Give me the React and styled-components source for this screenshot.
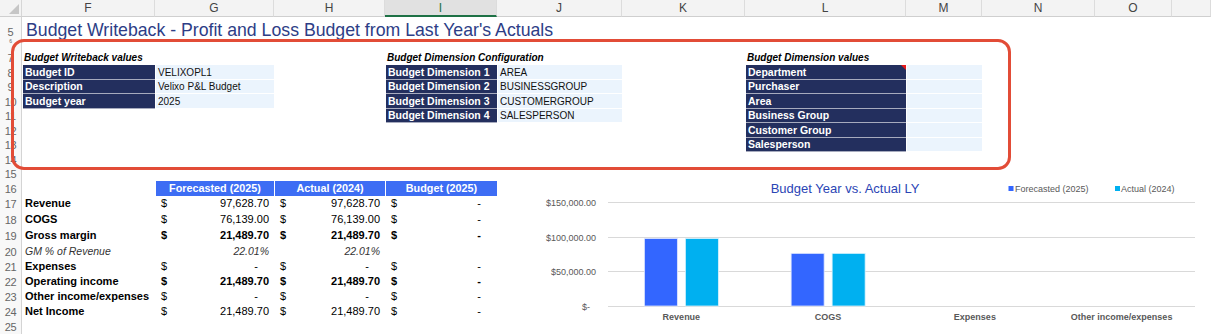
import React from 'react';
import styled, { createGlobalStyle, css } from 'styled-components';

const GlobalStyle = createGlobalStyle`
  html, body { margin: 0; padding: 0; background: #ffffff; }
  body { font-family: "Liberation Sans", Arial, sans-serif; overflow: hidden; }
`;

const COLS = ['F', 'G', 'H', 'I', 'J', 'K', 'L', 'M', 'N', 'O', ''];
const COL_WIDTHS = [133, 119, 111, 112, 125, 123, 161, 76, 113, 77];
const ROW_HEIGHTS = {
  5: 22, 6: 5, 7: 21, 8: 15, 9: 14, 10: 15, 11: 14, 12: 15, 13: 14, 14: 15,
  15: 14, 16: 15, 17: 15, 18: 16, 19: 16, 20: 16, 21: 15, 22: 15, 23: 15, 24: 15, 25: 15,
};
const ROWS = Object.keys(ROW_HEIGHTS).map(Number);

const col = (letter) => COLS.indexOf(letter) + 2;
const row = (n) => n - 3;

const Sheet = styled.div`
  position: relative;
  display: grid;
  grid-template-columns: 22px ${COL_WIDTHS.map((w) => `${w}px`).join(' ')} 1fr;
  grid-template-rows: 17px ${ROWS.map((r) => `${ROW_HEIGHTS[r]}px`).join(' ')};
  width: 1211px;
  height: 334px;
  overflow: hidden;
  background: #ffffff;
`;

const Corner = styled.div`
  grid-column: 1;
  grid-row: 1;
  position: relative;
  background: #f3f3f3;
  border-right: 1px solid #d6d6d6;
  border-bottom: 1px solid #cfcfcf;
  &::after {
    content: '';
    position: absolute;
    right: 2px;
    bottom: 2px;
    border-left: 10px solid transparent;
    border-bottom: 10px solid #c6c6c6;
  }
`;

const ColHead = styled.div`
  grid-row: 1;
  grid-column: ${(p) => p.$col};
  display: flex;
  align-items: center;
  justify-content: center;
  background: #f3f3f3;
  border-right: 1px solid #dcdcdc;
  border-bottom: 1px solid #cfcfcf;
  font-size: 12px;
  color: #444444;
  ${(p) =>
    p.$selected &&
    css`
      background: #e1e1e1;
      border-bottom: 2px solid #1e7145;
      color: #1e7145;
    `}
`;

const RowHead = styled.div`
  grid-column: 1;
  grid-row: ${(p) => p.$row};
  display: flex;
  align-items: flex-end;
  justify-content: center;
  overflow: hidden;
  background: #f8f8f8;
  border-right: 1px solid #d4d4d4;
  font-size: ${(p) => (p.$tiny ? '5px' : '11px')};
  line-height: ${(p) => (p.$tiny ? '5px' : '13px')};
  letter-spacing: -0.3px;
  color: #666666;
`;

const Cell = styled.div`
  grid-column: ${(p) => p.$col} / span ${(p) => p.$span || 1};
  grid-row: ${(p) => p.$row};
  display: flex;
  align-items: flex-end;
  min-width: 0;
  padding: 0 2px 1px 3px;
  font-size: 11px;
  line-height: 13px;
  color: #111111;
  white-space: nowrap;
`;

const Title = styled(Cell)`
  font-size: 17.7px;
  line-height: 18px;
  padding: 0 0 0 4px;
  color: #2d3d86;
`;

const SectionTitle = styled(Cell)`
  font-size: 10px;
  font-weight: bold;
  font-style: italic;
  padding-left: 2px;
  color: #000000;
`;

const NavyCell = styled(Cell)`
  position: relative;
  align-items: center;
  background: #232f5e;
  color: #ffffff;
  font-weight: bold;
  font-size: 10.5px;
  padding: 0 2px 0 2px;
  margin-left: 1px;
  border-bottom: 1px solid rgba(255, 255, 255, 0.6);
  ${(p) =>
    p.$comment &&
    css`
      &::after {
        content: '';
        position: absolute;
        top: 0;
        right: 0;
        border-left: 5px solid transparent;
        border-top: 5px solid #e81a1a;
      }
    `}
`;

const ValueCell = styled(Cell)`
  align-items: center;
  background: #ebf4fd;
  font-size: 10px;
  color: #111111;
  padding: 0 2px 0 2px;
  border-left: 1px solid #ffffff;
  border-bottom: 1px solid #ffffff;
`;

const HeadCell = styled(Cell)`
  justify-content: center;
  align-items: center;
  padding: 0;
  background: #3d6df4;
  color: #ffffff;
  font-weight: bold;
  font-size: 10.8px;
  margin-left: 1px;
`;

const RowLabel = styled(Cell)`
  font-weight: ${(p) => (p.$italic ? 'normal' : 'bold')};
  font-style: ${(p) => (p.$italic ? 'italic' : 'normal')};
  font-size: ${(p) => (p.$italic ? '10.5px' : '11px')};
  color: ${(p) => (p.$italic ? '#333333' : '#000000')};
  padding-left: 3px;
`;

const Amount = styled(Cell)`
  justify-content: ${(p) => (p.$percent ? 'flex-end' : 'space-between')};
  padding: 0 5px 1px 6px;
  font-weight: ${(p) => (p.$bold ? 'bold' : 'normal')};
  font-style: ${(p) => (p.$percent ? 'italic' : 'normal')};
  font-size: ${(p) => (p.$percent ? '10.5px' : '11px')};
  color: ${(p) => (p.$percent ? '#333333' : '#000000')};
`;

const Dash = styled.span`
  padding-right: 11px;
`;

const Highlight = styled.div`
  position: absolute;
  left: 11px;
  top: 39px;
  width: 1000px;
  height: 131px;
  box-sizing: border-box;
  border: 3.5px solid #e24c37;
  border-radius: 13px;
  pointer-events: none;
`;

const ChartArea = styled.div`
  grid-column: ${col('J')} / -1;
  grid-row: ${row(16)} / ${row(25) + 1};
  position: relative;
`;

const ChartSvg = styled.svg`
  display: block;
  font-family: "Liberation Sans", Arial, sans-serif;
`;

const ChartTitle = styled.text`
  font-size: 13px;
  fill: #2b45b5;
`;

const AxisText = styled.text`
  font-size: 9px;
  fill: #595959;
  font-weight: ${(p) => (p.$bold ? 'bold' : 'normal')};
`;

const writebackRows = [
  ['Budget ID', 'VELIXOPL1'],
  ['Description', 'Velixo P&L Budget'],
  ['Budget year', '2025'],
];

const dimensionConfig = [
  ['Budget Dimension 1', 'AREA'],
  ['Budget Dimension 2', 'BUSINESSGROUP'],
  ['Budget Dimension 3', 'CUSTOMERGROUP'],
  ['Budget Dimension 4', 'SALESPERSON'],
];

const dimensionValues = ['Department', 'Purchaser', 'Area', 'Business Group', 'Customer Group', 'Salesperson'];

const pnlRows = [
  { r: 17, label: 'Revenue', values: ['97,628.70', '97,628.70', null] },
  { r: 18, label: 'COGS', values: ['76,139.00', '76,139.00', null] },
  { r: 19, label: 'Gross margin', values: ['21,489.70', '21,489.70', null], bold: true },
  { r: 20, label: 'GM % of Revenue', values: ['22.01%', '22.01%'], percent: true },
  { r: 21, label: 'Expenses', values: [null, null, null] },
  { r: 22, label: 'Operating income', values: ['21,489.70', '21,489.70', null], bold: true },
  { r: 23, label: 'Other income/expenses', values: [null, null, null] },
  { r: 24, label: 'Net Income', values: ['21,489.70', '21,489.70', null] },
];

const valueCols = ['G', 'H', 'I'];

const SCALE = 103.7 / 150000;
const ZERO_Y = 125;
const PLOT_LEFT = 111;
const PLOT_RIGHT = 698;
const CAT_W = (PLOT_RIGHT - PLOT_LEFT) / 4;
const categories = [
  { name: 'Revenue', f: 97628.7, a: 97628.7 },
  { name: 'COGS', f: 76139, a: 76139 },
  { name: 'Expenses', f: 0, a: 0 },
  { name: 'Other income/expenses', f: 0, a: 0 },
];
const gridlines = [
  { v: 150000, label: '$150,000.00' },
  { v: 100000, label: '$100,000.00' },
  { v: 50000, label: '$50,000.00' },
  { v: 0, label: '$-' },
];

function Chart() {
  return (
    <ChartArea>
      <ChartSvg width="714" height="153" viewBox="0 0 714 153">
        <ChartTitle x="348" y="12" textAnchor="middle">Budget Year vs. Actual LY</ChartTitle>
        <rect x="511.5" y="5" width="5" height="5" fill="#3366ff" />
        <AxisText x="518" y="10.5">Forecasted (2025)</AxisText>
        <rect x="618" y="5" width="5" height="5" fill="#00b0f0" />
        <AxisText x="624" y="10.5">Actual (2024)</AxisText>
        {gridlines.map((g) => {
          const y = Math.round(ZERO_Y - g.v * SCALE) + 0.5;
          return (
            <g key={g.label}>
              <line x1={PLOT_LEFT} x2={PLOT_RIGHT} y1={y} y2={y} stroke="#d9d9d9" strokeWidth="1" />
              <AxisText x={g.v === 0 ? 93 : 99} y={y + 3} textAnchor="end">{g.label}</AxisText>
            </g>
          );
        })}
        {categories.map((c, i) => {
          const cx = PLOT_LEFT + CAT_W * (i + 0.5);
          const hf = c.f * SCALE;
          const ha = c.a * SCALE;
          return (
            <g key={c.name}>
              {hf > 0 && (
                <rect x={cx - 37} y={ZERO_Y - hf} width="33" height={hf} fill="#3366ff" stroke="#dfe7ff" strokeWidth="0.8" />
              )}
              {ha > 0 && (
                <rect x={cx + 4} y={ZERO_Y - ha} width="33" height={ha} fill="#00b0f0" stroke="#d9f3fd" strokeWidth="0.8" />
              )}
              <AxisText $bold x={cx} y="139" textAnchor="middle">{c.name}</AxisText>
            </g>
          );
        })}
      </ChartSvg>
    </ChartArea>
  );
}

export default function App() {
  return (
    <>
      <GlobalStyle />
      <Sheet>
        <Corner />
        {COLS.map((c, i) => (
          <ColHead key={`ch${i}`} $col={i + 2} $selected={c === 'I'}>{c}</ColHead>
        ))}
        {ROWS.map((r) => (
          <RowHead key={`rh${r}`} $row={row(r)} $tiny={ROW_HEIGHTS[r] < 10}>{r}</RowHead>
        ))}

        <Title $col={col('F')} $span={10} $row={row(5)}>
          Budget Writeback - Profit and Loss Budget from Last Year's Actuals
        </Title>

        <SectionTitle $col={col('F')} $span={2} $row={row(7)}>Budget Writeback values</SectionTitle>
        {writebackRows.map(([k, v], i) => (
          <React.Fragment key={k}>
            <NavyCell $col={col('F')} $row={row(8 + i)}>{k}</NavyCell>
            <ValueCell $col={col('G')} $row={row(8 + i)}>{v}</ValueCell>
          </React.Fragment>
        ))}

        <SectionTitle $col={col('I')} $span={2} $row={row(7)}>Budget Dimension Configuration</SectionTitle>
        {dimensionConfig.map(([k, v], i) => (
          <React.Fragment key={k}>
            <NavyCell $col={col('I')} $row={row(8 + i)}>{k}</NavyCell>
            <ValueCell $col={col('J')} $row={row(8 + i)}>{v}</ValueCell>
          </React.Fragment>
        ))}

        <SectionTitle $col={col('L')} $span={2} $row={row(7)}>Budget Dimension values</SectionTitle>
        {dimensionValues.map((k, i) => (
          <React.Fragment key={k}>
            <NavyCell $col={col('L')} $row={row(8 + i)} $comment={i === 0}>{k}</NavyCell>
            <ValueCell $col={col('M')} $row={row(8 + i)} />
          </React.Fragment>
        ))}

        <HeadCell $col={col('G')} $row={row(16)}>Forecasted (2025)</HeadCell>
        <HeadCell $col={col('H')} $row={row(16)}>Actual (2024)</HeadCell>
        <HeadCell $col={col('I')} $row={row(16)}>Budget (2025)</HeadCell>

        {pnlRows.map((pr) => (
          <React.Fragment key={pr.label}>
            <RowLabel $col={col('F')} $row={row(pr.r)} $italic={pr.percent}>{pr.label}</RowLabel>
            {pr.values.map((v, i) =>
              pr.percent ? (
                <Amount key={i} $col={col(valueCols[i])} $row={row(pr.r)} $percent>{v}</Amount>
              ) : (
                <Amount key={i} $col={col(valueCols[i])} $row={row(pr.r)} $bold={pr.bold}>
                  <span>$</span>
                  {v ? <span>{v}</span> : <Dash>-</Dash>}
                </Amount>
              )
            )}
          </React.Fragment>
        ))}

        <Chart />
        <Highlight />
      </Sheet>
    </>
  );
}
